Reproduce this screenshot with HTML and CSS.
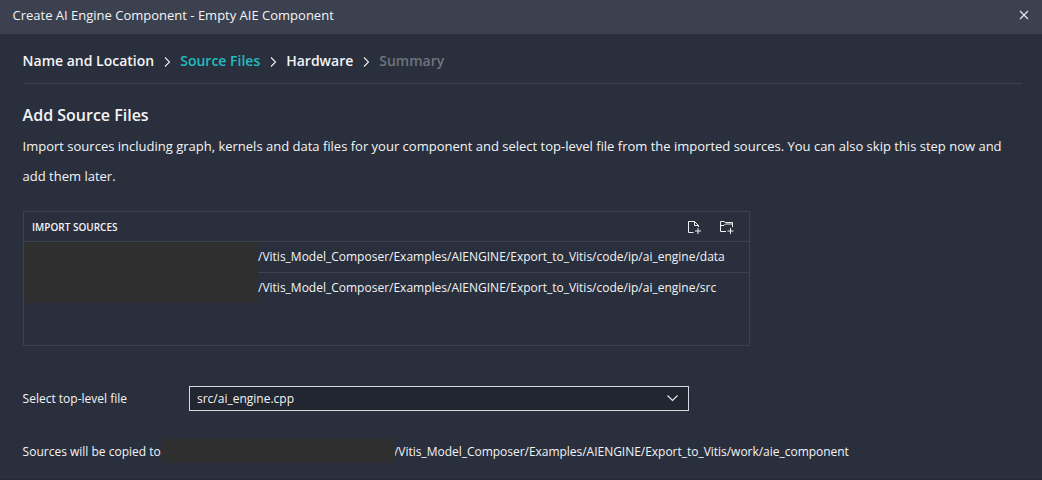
FILE: index.html
```html
<!DOCTYPE html>
<html lang="en">
<head>
<meta charset="utf-8">
<title>Create AI Engine Component</title>
<link rel="stylesheet" href="styles.css">
</head>
<body>
<div class="dialog">
  <header class="titlebar">
    <span class="title">Create AI Engine Component - Empty AIE Component</span>
    <svg class="close" viewBox="0 0 10 10"><path d="M1 1L9 9M9 1L1 9"/></svg>
  </header>
  <main class="content">
    <nav class="steps">
      <span>Name and Location</span>
      <svg class="sep" viewBox="0 0 8 12"><path d="M2 1.5L6.5 6L2 10.5"/></svg>
      <span class="active">Source Files</span>
      <svg class="sep" viewBox="0 0 8 12"><path d="M2 1.5L6.5 6L2 10.5"/></svg>
      <span>Hardware</span>
      <svg class="sep" viewBox="0 0 8 12"><path d="M2 1.5L6.5 6L2 10.5"/></svg>
      <span class="disabled">Summary</span>
    </nav>
    <h1 class="heading">Add Source Files</h1>
    <p class="intro">Import sources including graph, kernels and data files for your component and select top-level file from the imported sources. You can also skip this step now and add them later.</p>
    <section class="sources">
      <div class="sources-head">
        <span>IMPORT SOURCES</span>
        <div class="actions">
          <svg viewBox="0 0 14 14"><path d="M6.5 12.5H1.5V1.5H7.5L11.5 5.5V7M7.5 1.5V5.5H11.5M11 8V14M8 11H14"/></svg>
          <svg viewBox="0 0 14 14"><path d="M7 11.5H1.5V1.5H5L6.5 2.5H13.5V7M1.5 5.5H5L6.5 4H13.5M11.5 8V14M8.5 11H14.5"/></svg>
        </div>
      </div>
      <div class="row"><span class="mask"></span><span class="path">/Vitis_Model_Composer/Examples/AIENGINE/Export_to_Vitis/code/ip/ai_engine/data</span></div>
      <div class="row"><span class="mask"></span><span class="path">/Vitis_Model_Composer/Examples/AIENGINE/Export_to_Vitis/code/ip/ai_engine/src</span></div>
    </section>
    <div class="field">
      <span class="label">Select top-level file</span>
      <div class="select"><span>src/ai_engine.cpp</span><svg viewBox="0 0 12 8"><path d="M1.5 1.5L6.5 6.5L11.5 1.5"/></svg></div>
    </div>
    <div class="dest"><span class="dest-label">Sources will be copied to</span><span class="dest-mask"></span><span class="dest-path">/Vitis_Model_Composer/Examples/AIENGINE/Export_to_Vitis/work/aie_component</span></div>
  </main>
</div>
</body>
</html>
```
FILE: styles.css
```css
* { box-sizing: border-box; }
body { margin: 0; background: #2a2f3d; color: #f4f4f5; font: 12px "Open Sans", sans-serif; overflow: hidden; }
svg { fill: none; stroke: #eee; stroke-width: 1.1; flex: none; overflow: visible; }
.dialog { height: 480px; border-bottom: 1px solid #272833; }
.titlebar { height: 34px; background: #3c4150; display: flex; justify-content: space-between; align-items: center; padding: 0 13.5px 4px 12.5px; font-size: 13px; }
.close { width: 10px; height: 10px; }
.content { padding: 0 20px 0 22.6px; }
.steps { height: 50px; display: flex; align-items: center; border-bottom: 1px solid #3d4250; padding-top: 4px; font-size: 14px; font-weight: 600; line-height: 20px; }
.sep { width: 8px; height: 12px; margin: 2px 9px 0; }
.active { color: #21bcbe; }
.disabled { color: #70747f; }
.heading { margin: 19px 0 0; font-size: 16px; line-height: 24px; font-weight: 600; }
.intro { margin: 4px 0 0; font-size: 13px; line-height: 30px; }
.sources { width: 727px; height: 135px; margin: 20px 0 0 0.4px; border: 1px solid #3d4250; }
.sources-head { height: 30px; display: flex; align-items: center; justify-content: space-between; padding: 0 16px 0 8px; font-size: 10px; font-weight: 600; border-bottom: 1px solid #3d4250; }
.actions { display: flex; gap: 18px; }
.actions svg { width: 14px; height: 14px; stroke-width: 1; }
.row { height: 31px; display: flex; align-items: center; border-bottom: 1px solid #3d4250; }
.row:last-child { height: 30px; border: 0; }
.path { padding-bottom: 1px; }
.row:last-child .path { padding-bottom: 2px; }
.mask { width: 234px; height: 31px; background: #2f2f2f; flex: none; }
.row:last-child .mask { height: 30px; }
.field { margin-top: 39px; height: 26px; display: flex; align-items: center; }
.label { width: 166.4px; }
.select { width: 500px; height: 25px; border: 1px solid #d5d9e0; background: #222630; display: flex; justify-content: space-between; align-items: center; padding: 0 10px 0 7px; }
.select svg { width: 12px; height: 8px; }
.dest { margin-top: 28px; height: 24px; display: flex; align-items: center; white-space: nowrap; }
.dest-label { width: 138.4px; }
.dest-mask { width: 234px; height: 24px; background: #2f2f2f; position: relative; }
.dest-path { margin-left: -1px; letter-spacing: -0.025px; }
```
